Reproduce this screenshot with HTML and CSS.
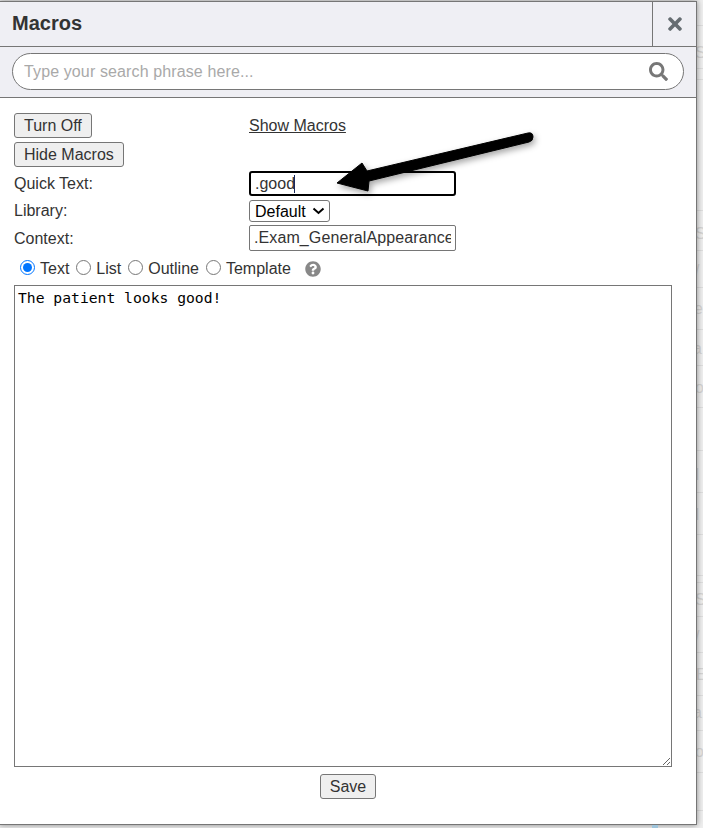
FILE: index.html
```html
<!DOCTYPE html>
<html lang="en">
<head>
    <meta charset="UTF-8">
    <meta name="viewport" content="width=device-width, initial-scale=1.0">
    <title>Macros</title>
    <link rel="stylesheet" href="styles.css">
</head>
<body>
    <!-- what is left visible of the page behind the dialog -->
    <svg class="page-behind" width="7" height="828" viewBox="697 0 7 828">
        <g stroke="#dedede" stroke-width="1">
            <path d="M697 25.5h7M697 68.5h7M697 79.5h7M697 210.5h7M697 250.5h7M697 287.5h7M697 329.5h7M697 365.5h7M697 407.5h7M697 450.5h7M697 492.5h7M697 534.5h7M697 575.5h7M697 582.5h7M697 616.5h7M697 652.5h7M697 695.5h7M697 730.5h7M697 772.5h7M697 810.5h7"/>
        </g>
        <g class="behind-text">
            <text x="696" y="58">S</text>
            <text x="696" y="239">S</text>
            <text x="696" y="276">/</text>
            <text x="695" y="314">e</text>
            <text x="694" y="354">a</text>
            <text x="696" y="393">o</text>
            <text x="696" y="480">I</text>
            <text x="696" y="520">I</text>
            <text x="696" y="605">S</text>
            <text x="696" y="642">/</text>
            <text x="697" y="680">E</text>
            <text x="694" y="718">a</text>
            <text x="696" y="757">o</text>
        </g>
    </svg>

    <div class="modal">
        <div class="modal-header">
            <div class="modal-title">Macros</div>
            <div class="modal-close">
                <svg class="close-icon" viewBox="0 0 352 512"><path d="M242.72 256l100.07-100.07c12.28-12.28 12.28-32.19 0-44.48l-22.24-22.24c-12.28-12.28-32.19-12.28-44.48 0L176 189.28 75.93 89.21c-12.28-12.28-32.19-12.28-44.48 0L9.21 111.45c-12.28 12.28-12.28 32.19 0 44.48L109.28 256 9.21 356.07c-12.28 12.28-12.28 32.19 0 44.48l22.24 22.24c12.28 12.28 32.2 12.28 44.48 0L176 322.72l100.07 100.07c12.28 12.28 32.2 12.28 44.48 0l22.24-22.24c12.28-12.28 12.28-32.19 0-44.48L242.72 256z"/></svg>
            </div>
        </div>

        <div class="search-bar">
            <div class="search-box">
                <input class="search-input" type="text" placeholder="Type your search phrase here...">
                <svg class="search-icon" viewBox="0 0 512 512"><path d="M505 442.7L405.3 343c-4.5-4.5-10.6-7-17-7H372c27.6-35.3 44-79.7 44-128C416 93.1 322.9 0 208 0S0 93.1 0 208s93.1 208 208 208c48.3 0 92.7-16.4 128-44v16.3c0 6.4 2.5 12.5 7 17l99.7 99.7c9.4 9.4 24.6 9.4 33.9 0l28.3-28.3c9.4-9.4 9.4-24.6.1-34zM208 336c-70.7 0-128-57.2-128-128 0-70.7 57.2-128 128-128 70.7 0 128 57.2 128 128 0 70.7-57.2 128-128 128z"/></svg>
            </div>
        </div>

        <div class="modal-body">
            <div class="form-grid">
                <div><button class="btn">Turn Off</button></div>
                <div><a class="show-link" href="#">Show Macros</a></div>
                <div class="full-row"><button class="btn">Hide Macros</button></div>

                <label class="field-label">Quick Text:</label>
                <div class="quick-wrap">
                    <input class="text-field quick-field" type="text" value=".good">
                    <span class="caret"></span>
                </div>

                <label class="field-label">Library:</label>
                <div class="select-wrap">
                    <select class="library-select">
                        <option>Default</option>
                    </select>
                    <svg class="select-arrow" width="13" height="8" viewBox="0 0 13 8"><path d="M1.5 1.5L6.5 6L11.5 1.5" fill="none" stroke="#000" stroke-width="2"/></svg>
                </div>

                <label class="field-label">Context:</label>
                <div><input class="text-field context-field" type="text" value=".Exam_GeneralAppearance"></div>
            </div>

            <div class="type-row">
                <label class="type-option"><input type="radio" name="macroType" checked> Text</label>
                <label class="type-option"><input type="radio" name="macroType"> List</label>
                <label class="type-option"><input type="radio" name="macroType"> Outline</label>
                <label class="type-option"><input type="radio" name="macroType"> Template</label>
                <svg class="help-icon" viewBox="0 0 512 512"><path d="M504 256c0 136.997-111.043 248-248 248S8 392.997 8 256C8 119.083 119.043 8 256 8s248 111.083 248 248zM262.655 90c-54.497 0-89.255 22.957-116.549 63.758-3.536 5.286-2.353 12.415 2.715 16.258l34.699 26.31c5.205 3.947 12.621 3.008 16.665-2.122 17.864-22.658 30.113-35.797 57.303-35.797 20.429 0 45.698 13.148 45.698 32.958 0 14.976-12.363 22.667-32.534 33.976C247.128 238.528 216 254.941 216 296v4c0 6.627 5.373 12 12 12h56c6.627 0 12-5.373 12-12v-1.333c0-28.462 83.186-29.647 83.186-106.667 0-58.002-60.165-102-116.531-102zM256 338c-25.365 0-46 20.635-46 46 0 25.364 20.635 46 46 46s46-20.636 46-46c0-25.365-20.635-46-46-46z"/></svg>
            </div>

            <textarea class="macro-text">The patient looks good!</textarea>

            <div class="save-row"><button class="btn">Save</button></div>
        </div>
    </div>
    <div class="page-tab"></div>

    <!-- annotation drawn on top of the screenshot -->
    <svg class="arrow" width="703" height="828" viewBox="0 0 703 828">
        <path d="M337 183L362 163L367 171L528 133Q533 132 533 137Q533 141 529 142L369 181L368 191Z" fill="#000" stroke="#000" stroke-width="1" stroke-linejoin="round"/>
    </svg>
</body>
</html>
```

FILE: styles.css
```css
html, body {
    height: 100%;
}
body {
    margin: 0;
    padding-top: 1px;
    box-sizing: border-box;
    overflow: hidden;
    position: relative;
    background-color: #efefef;
    font-family: "Liberation Sans", Arial, sans-serif;
    font-size: 16px;
    color: #333;
}
.page-behind {
    position: absolute;
    top: 0;
    right: 0;
}
.behind-text {
    font-family: "Liberation Sans", Arial, sans-serif;
    font-size: 16px;
    fill: #d4d4d4;
}
.page-tab {
    position: absolute;
    left: 652px;
    top: 825px;
    width: 6px;
    height: 3px;
    background-color: #9fc5dc;
}
.modal {
    position: relative;
    width: 698px;
    margin-left: -1px;
    box-sizing: border-box;
    background-color: white;
    border: 1px solid #767676;
    box-shadow: 0 0 6px rgba(0, 0, 0, 0.45);
}
.modal-header {
    display: flex;
    height: 44px;
    background-color: #efeff4;
    border-bottom: 1px solid #767676;
}
.modal-title {
    flex: 1;
    padding-left: 12px;
    font-size: 20px;
    font-weight: bold;
    line-height: 43px;
}
.modal-close {
    width: 43px;
    display: flex;
    align-items: center;
    justify-content: center;
    border-left: 1px solid #767676;
}
.close-icon {
    width: 14px;
    height: 20px;
    fill: #666d72;
}
.search-bar {
    padding: 6px 12px 7px;
    background-color: #efeff4;
    border-bottom: 1px solid #767676;
}
.search-box {
    position: relative;
}
.search-input {
    display: block;
    width: 100%;
    height: 37px;
    box-sizing: border-box;
    padding: 0 50px 0 11px;
    border: 1px solid #767676;
    border-radius: 19px;
    background-color: white;
    font-family: inherit;
    font-size: 16px;
}
.search-input::placeholder {
    color: #a9a9a9;
    letter-spacing: 0.12px;
}
.search-icon {
    position: absolute;
    top: 9px;
    right: 16px;
    width: 19px;
    height: 19px;
    fill: #777;
}
.modal-body {
    padding: 15px 14px 25px;
}
.form-grid {
    display: grid;
    grid-template-columns: 235px 1fr;
    row-gap: 4px;
}
.full-row {
    grid-column: 1 / 3;
}
.btn {
    display: block;
    height: 25px;
    padding: 0 9px;
    box-sizing: border-box;
    background-color: #efefef;
    border: 1px solid #767676;
    border-radius: 3px;
    font-family: inherit;
    font-size: 16px;
    color: #333;
}
.show-link {
    color: #333;
    line-height: 25px;
}
.field-label {
    align-self: center;
}
.text-field {
    display: block;
    width: 207px;
    box-sizing: border-box;
    padding: 0 4px;
    background-color: white;
    font-family: inherit;
    font-size: 16px;
    color: #333;
}
.quick-wrap {
    position: relative;
}
.quick-field {
    height: 25px;
    border: 2px solid #000;
    border-radius: 3px;
}
.caret {
    position: absolute;
    left: 45px;
    top: 4px;
    width: 1px;
    height: 18px;
    background-color: #1a2a5a;
}
.select-wrap {
    position: relative;
    height: 22px;
}
.library-select {
    display: block;
    width: 81px;
    height: 22px;
    padding: 0 0 0 5px;
    appearance: none;
    background-color: white;
    border: 1px solid #767676;
    border-radius: 3px;
    font-family: inherit;
    font-size: 16px;
    color: #000;
}
.select-arrow {
    position: absolute;
    left: 63px;
    top: 7px;
    pointer-events: none;
}
.context-field {
    height: 26px;
    margin-top: -1px;
    border: 1px solid #767676;
    border-radius: 2px;
    letter-spacing: 0.1px;
}
.type-row {
    display: flex;
    align-items: center;
    height: 24px;
    margin-top: 6px;
    padding-left: 6px;
}
.type-option {
    display: flex;
    align-items: center;
    gap: 5px;
    margin-right: 7px;
}
.type-option input {
    width: 15px;
    height: 15px;
    margin: -3px 0 0 0;
}
.help-icon {
    width: 16px;
    height: 16px;
    margin-left: 7px;
    fill: #888;
}
.macro-text {
    display: block;
    width: 658px;
    height: 482px;
    box-sizing: border-box;
    margin-top: 4px;
    padding: 3px 3px;
    border: 1px solid #767676;
    border-radius: 0;
    outline: none;
    font-family: "DejaVu Sans Mono", monospace;
    font-size: 14.7px;
    color: #000;
}
.save-row {
    display: flex;
    justify-content: center;
    margin-top: 7px;
}
.arrow {
    position: absolute;
    top: 0;
    left: 0;
    pointer-events: none;
    filter: drop-shadow(2px 3px 3px rgba(0, 0, 0, 0.35));
}
```
